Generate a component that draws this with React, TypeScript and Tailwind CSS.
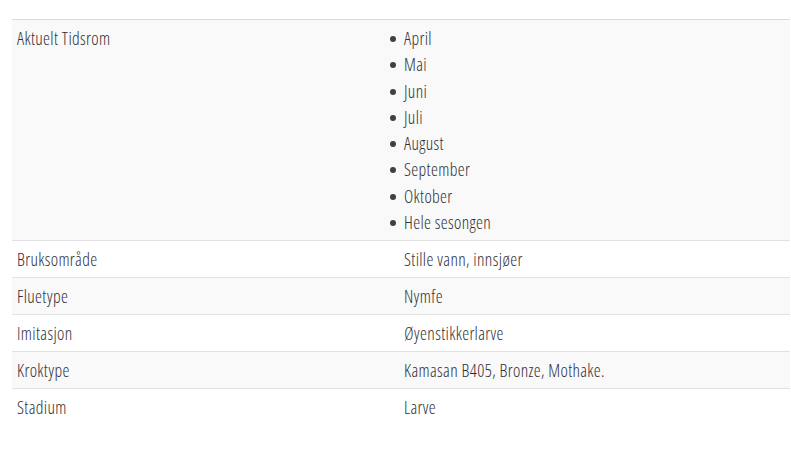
import * as React from "react";

const months = ["April", "Mai", "Juni", "Juli", "August", "September", "Oktober", "Hele sesongen"];

const rows: { label: string; value: string }[] = [
  { label: "Bruksområde", value: "Stille vann, innsjøer" },
  { label: "Fluetype", value: "Nymfe" },
  { label: "Imitasjon", value: "Øyenstikkerlarve" },
  { label: "Kroktype", value: "Kamasan B405, Bronze, Mothake." },
  { label: "Stadium", value: "Larve" },
];

export default function App() {
  return (
    <div
      className="min-h-[462px] bg-white pt-[19px] pl-[12px] text-[17.5px] font-light tracking-[0.35px] text-[#2f2f36]"
      style={{ fontFamily: '"Open Sans", Roboto, sans-serif', fontStretch: "77%" }}
    >
      <div className="w-[778px]">
        <div className="grid grid-cols-[387px_1fr] border-t border-[#dcdcdc] bg-[#f9f9f9]">
          <div className="pl-[5px] pt-[5px] leading-[26.3px]">Aktuelt Tidsrom</div>
          <ul className="pl-[5px] pt-[5px] pb-[5px]">
            {months.map((m) => (
              <li key={m} className="relative leading-[26.3px]">
                <span className="absolute left-[-14px] top-[11px] size-[6px] rounded-full bg-[#3f3f46]" />
                {m}
              </li>
            ))}
          </ul>
        </div>
        {rows.map((row, i) => (
          <div
            key={row.label}
            className={
              "grid grid-cols-[387px_1fr] border-t border-[#e2e2e2] " +
              (i % 2 === 1 ? "bg-[#f9f9f9]" : "bg-white")
            }
          >
            <div className="pl-[5px] py-[5px] leading-[26px]">{row.label}</div>
            <div className="pl-[5px] py-[5px] leading-[26px]">{row.value}</div>
          </div>
        ))}
      </div>
    </div>
  );
}
